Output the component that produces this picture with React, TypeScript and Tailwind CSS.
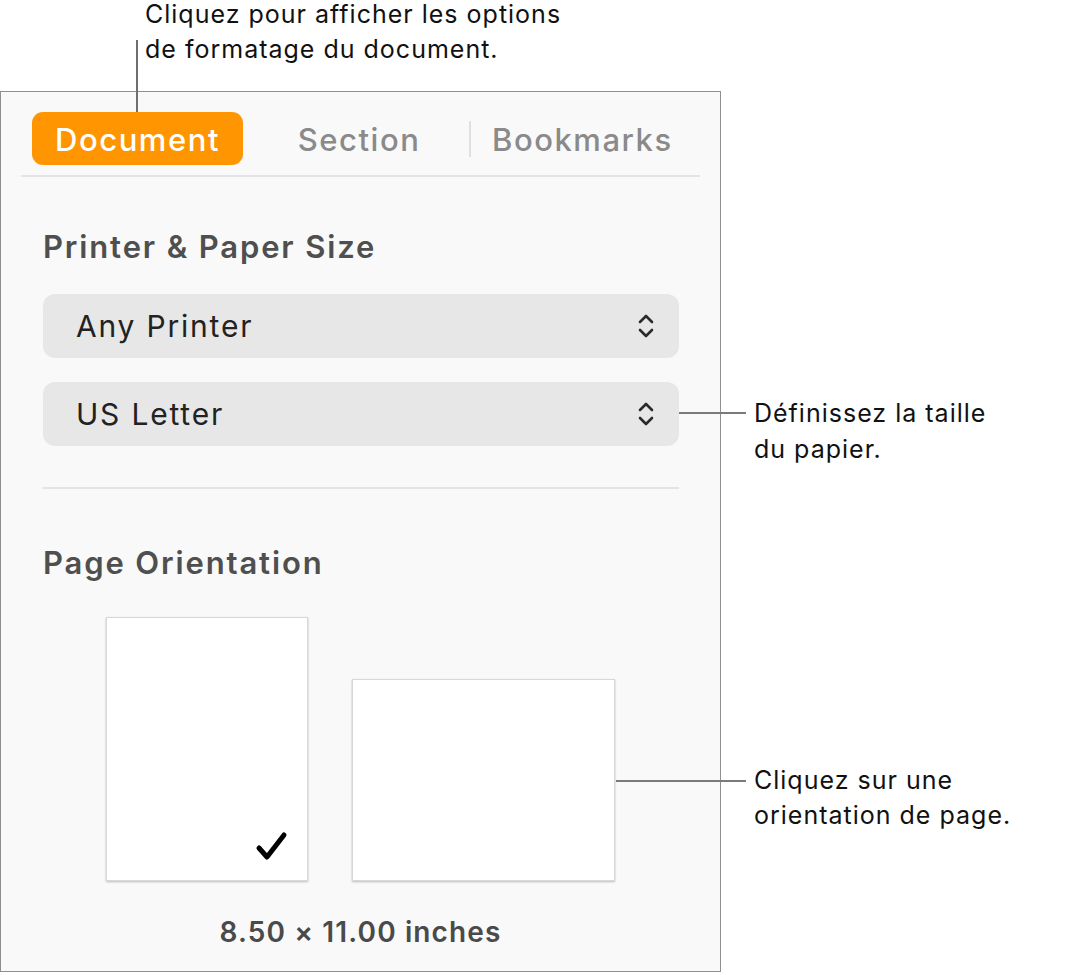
import React from 'react';

const font = { fontFamily: 'Inter, "Noto Sans", "Liberation Sans", sans-serif' };

function Chevrons() {
  return (
    <svg width="20" height="30" viewBox="0 0 20 30" fill="none" stroke="#2a2a2a" strokeWidth="2.6" strokeLinecap="round" strokeLinejoin="round">
      <path d="M4 11 L10 5 L16 11" />
      <path d="M4 19 L10 25 L16 19" />
    </svg>
  );
}

function Select({ label }: { label: string }) {
  return (
    <div className="flex h-[64px] items-center justify-between rounded-[12px] bg-[#e7e7e7] pl-[33px] pr-[23px]">
      <span className="text-[30px] tracking-[0.06em] text-[#222]">{label}</span>
      <Chevrons />
    </div>
  );
}

export default function App() {
  return (
    <div className="relative h-[975px] w-[1071px] bg-white" style={font}>
      {/* inspector panel */}
      <div className="absolute left-0 top-[91px] flex h-[881px] w-[721px] flex-col border border-[#8f8f8f] bg-[#f9f9f9]">
        {/* tabs */}
        <div className="ml-[31px] mt-[20px] flex h-[53px] items-center">
          <div className="flex h-[53px] w-[211px] items-center justify-center rounded-[11px] bg-[#ff9500] pt-[3px] text-[31px] font-medium tracking-[0.05em] text-white">
            Document
          </div>
          <div className="flex w-[232px] justify-center pt-[3px] text-[31px] font-medium tracking-[0.05em] text-[#8a8a8a]">
            Section
          </div>
          <div className="-ml-[6px] h-[36px] w-[2px] bg-[#e0e0e0]" />
          <div className="ml-[21px] pt-[3px] text-[31px] font-medium tracking-[0.05em] text-[#8a8a8a]">Bookmarks</div>
        </div>
        <div className="ml-[20px] mt-[10px] h-[2px] w-[679px] bg-[#e4e4e4]" />

        <div className="flex flex-col px-[42px]">
          <div className="mt-[52px] text-[31px] font-semibold leading-[36px] tracking-[0.06em] text-[#4f4f4f]">
            Printer &amp; Paper Size
          </div>
          <div className="mt-[29px] flex w-[636px] flex-col gap-[24px]">
            <Select label="Any Printer" />
            <Select label="US Letter" />
          </div>
          <div className="mt-[41px] h-[2px] w-[636px] bg-[#e4e4e4]" />
          <div className="mt-[56px] text-[31px] font-semibold leading-[36px] tracking-[0.06em] text-[#4f4f4f]">
            Page Orientation
          </div>

          <div className="ml-[63px] mt-[36px] flex items-end gap-[44px]">
            <div className="relative h-[264px] w-[202px] border border-[#d8d8d8] bg-white shadow-[0_1px_2px_rgba(0,0,0,0.25)]">
              <svg className="absolute left-[147px] top-[212px]" width="36" height="32" viewBox="0 0 36 32" fill="none" stroke="#000" strokeWidth="5" strokeLinecap="round" strokeLinejoin="round">
                <path d="M5 18 L13 27 L30 5" />
              </svg>
            </div>
            <div className="h-[202px] w-[263px] border border-[#d8d8d8] bg-white shadow-[0_1px_2px_rgba(0,0,0,0.25)]" />
          </div>
        </div>

        <div className="mt-[30px] w-[719px] text-center text-[28px] font-semibold tracking-[0.04em] text-[#4a4a4a]">
          8.50 × 11.00 inches
        </div>
      </div>

      {/* callout: tabs */}
      <div className="absolute left-[145px] top-[-3px] text-[25px] leading-[35px] tracking-[0.04em] text-[#111]">
        <div>Cliquez pour afficher les options</div>
        <div>de formatage du document.</div>
      </div>
      <div className="absolute left-[136px] top-[40px] h-[72px] w-[2px] bg-[#6f6f6f]" />

      {/* callout: paper size */}
      <div className="absolute left-[679px] top-[412px] h-[2px] w-[67px] bg-[#7a7a7a]" />
      <div className="absolute left-[754px] top-[395px] text-[25px] leading-[36px] tracking-[0.04em] text-[#111]">
        <div>Définissez la taille</div>
        <div>du papier.</div>
      </div>

      {/* callout: orientation */}
      <div className="absolute left-[616px] top-[780px] h-[2px] w-[130px] bg-[#7a7a7a]" />
      <div className="absolute left-[754px] top-[763px] text-[25px] leading-[35px] tracking-[0.04em] text-[#111]">
        <div>Cliquez sur une</div>
        <div>orientation de page.</div>
      </div>
    </div>
  );
}
